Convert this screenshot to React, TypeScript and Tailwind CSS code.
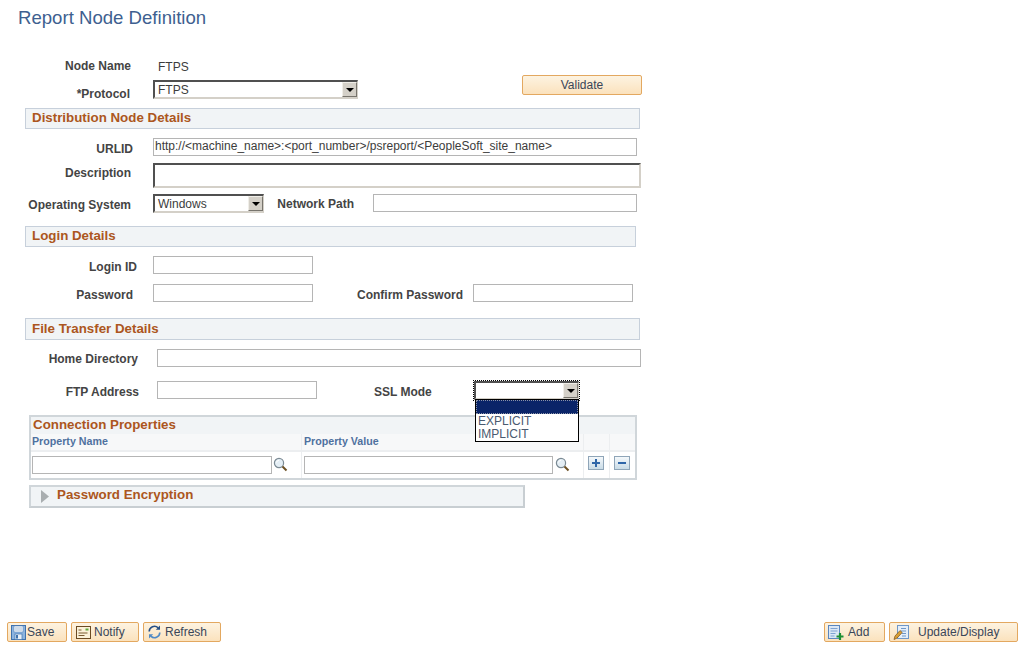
import React from "react";

const Label = ({ w, children, cls = "" }: { w: string; children: React.ReactNode; cls?: string }) => (
  <span className={`shrink-0 whitespace-nowrap text-right text-[12px] leading-[14px] font-bold text-[#444444] ${w} ${cls}`}>{children}</span>
);

const Input = ({ w, h = "h-[18px]", ml = "", value = "" }: { w: string; h?: string; ml?: string; value?: string }) => (
  <div className={`box-border shrink-0 overflow-hidden whitespace-nowrap border border-[#b5b5b5] bg-white pl-[1px] text-[12px] leading-[15px] text-[#3c3c3c] ${w} ${h} ${ml}`}>{value}</div>
);

const Arrow = () => (
  <div className="box-border flex h-[15px] w-[15px] shrink-0 items-center justify-center border border-t-[#f0eee8] border-l-[#f0eee8] border-r-[#77746d] border-b-[#77746d] bg-[#d4d0c8]">
    <svg width="8" height="4" viewBox="0 0 8 4"><path d="M0 0h8L4 4z" fill="#000" /></svg>
  </div>
);

const Select = ({ w, ml = "", value }: { w: string; ml?: string; value: string }) => (
  <div className={`box-border flex h-[19px] shrink-0 items-center justify-between border-2 border-r border-t-[#505050] border-l-[#505050] border-r-[#d4d0c8] border-b-[#d4d0c8] bg-white pl-[3px] text-[12px] text-[#3c3c3c] ${w} ${ml}`}>
    <span className="leading-[14px]">{value}</span>
    <Arrow />
  </div>
);

const Section = ({ w, h, mt, children, cls = "-mt-[2px]" }: { w: string; h: string; mt: string; children: React.ReactNode; cls?: string }) => (
  <div className={`ml-[25px] box-border flex items-center border border-[#c7d0db] bg-[#f1f4f6] pl-[6px] text-[13.33px] font-bold text-[#ac5620] ${w} ${h} ${mt}`}>
    <span className={cls}>{children}</span>
  </div>
);

const Magnifier = () => (
  <svg width="15" height="15" viewBox="0 0 15 15" className="shrink-0">
    <circle cx="6" cy="6" r="4.600" fill="#e4eef5" stroke="#7b8a94" strokeWidth="1.200" />
    <path d="M3.500 5.500a2.600 2.600 0 0 1 2.400-2.200" stroke="#fff" fill="none" />
    <path d="M9.500 9.500l4 4" stroke="#6b4f22" strokeWidth="2" />
  </svg>
);

const PageButton = ({ w, icon, label, cls = "" }: { w: string; icon?: React.ReactNode; label: string; cls?: string }) => (
  <div className={`box-border flex h-[20px] shrink-0 items-center rounded-[2px] border border-[#e3a860] bg-gradient-to-b from-[#fdf3e1] to-[#fbe2bd] text-[12px] text-[#3a4658] ${w} ${cls}`}>
    {icon}
    <span className="leading-[14px]">{label}</span>
  </div>
);

const SaveIcon = () => (
  <svg width="15" height="15" viewBox="0 0 15 15" className="ml-[3px] mr-[1px] shrink-0">
    <rect x="0.500" y="0.500" width="14" height="14" fill="#8db4df" stroke="#3f72ad" />
    <rect x="3" y="1" width="9" height="6" fill="#fff" stroke="#5a86b8" strokeWidth="0.600" />
    <path d="M4 3h7M4 5h7" stroke="#9cb8d6" />
    <rect x="4" y="9" width="7" height="5.500" fill="#e8f0f8" stroke="#3f72ad" strokeWidth="0.700" />
    <rect x="5" y="10" width="2" height="3.500" fill="#3f72ad" />
  </svg>
);

const NotifyIcon = () => (
  <svg width="15" height="13" viewBox="0 0 15 13" className="ml-[4px] mr-[3px] shrink-0">
    <rect x="0.500" y="0.500" width="14" height="12" fill="#fbf1d8" stroke="#6b4a22" />
    <path d="M2.500 4h3M2.500 7h9M2.500 9.500h6" stroke="#7a5a30" />
    <rect x="9.500" y="2.500" width="3" height="2" fill="#5fa83c" />
  </svg>
);

const RefreshIcon = () => (
  <svg width="13" height="14" viewBox="0 0 13 14" className="ml-[4px] mr-[4px] shrink-0" fill="none">
    <path d="M1.200 6.500a5.200 5.200 0 0 1 8.900-3.600" stroke="#264f85" strokeWidth="1.600" />
    <path d="M7.800 4.800h4.200V0.600z" fill="#264f85" />
    <path d="M11.800 7.500a5.200 5.200 0 0 1-8.900 3.600" stroke="#4f8ac6" strokeWidth="1.600" />
    <path d="M5.200 9.200H1v4.200z" fill="#4f8ac6" />
  </svg>
);

const AddIcon = () => (
  <svg width="16" height="15" viewBox="0 0 16 15" className="ml-[3px] mr-[4px] shrink-0">
    <rect x="0.500" y="0.500" width="11" height="13" fill="#dbe7f5" stroke="#5a86c0" />
    <path d="M2.500 3.500h7M2.500 6h7M2.500 8.500h5M2.500 11h4" stroke="#7ea3d2" />
    <path d="M12 8v7M8.500 11.500h7" stroke="#1e8f34" strokeWidth="2.200" />
  </svg>
);

const UpdateIcon = () => (
  <svg width="16" height="15" viewBox="0 0 16 15" className="ml-[3px] mr-[9px] shrink-0">
    <rect x="4.500" y="0.500" width="11" height="13" fill="#e4eef9" stroke="#6f97c8" />
    <path d="M8 3.500h5M8 6h5M9 8.500h4M9 11h4" stroke="#6f97c8" />
    <path d="M1 14.500l1-3.500 5-5.500 2.200 2-5 5.500z" fill="#d9a035" stroke="#7a4f18" strokeWidth="0.700" />
  </svg>
);

const PlusMinus = ({ kind }: { kind: "plus" | "minus" }) => (
  <div className="box-border flex h-[14px] w-[16px] items-center justify-center border border-[#8fa5b8] bg-gradient-to-b from-[#f4f8fb] to-[#c9dbe6]">
    <svg width="10" height="10" viewBox="0 0 10 10">
      {kind === "plus" ? <path d="M5 1v8M1 5h8" stroke="#2f66a8" strokeWidth="2" /> : <path d="M1 5h8" stroke="#2f66a8" strokeWidth="2" />}
    </svg>
  </div>
);

export default function App() {
  return (
    <div className="relative flex h-[651px] w-[1023px] flex-col overflow-hidden bg-white font-['Liberation_Sans',Arial,sans-serif]">
      <div className="ml-[18px] mt-[7px] h-[21px] whitespace-nowrap text-[18.6px] leading-[21px] text-[#3e5f90]">Report Node Definition</div>

      <div className="mt-[30px] flex h-[41px] items-start">
        <div className="flex flex-col">
          <div className="flex h-[17px] items-center">
            <Label w="w-[131px]" cls="-mt-[2px]">Node Name</Label>
            <span className="ml-[27px] text-[12px] leading-[14px] text-[#3c3c3c]">FTPS</span>
          </div>
          <div className="mt-[5px] flex h-[19px] items-start">
            <Label w="w-[130px]" cls="mt-[7px]">*Protocol</Label>
            <Select w="w-[205px]" ml="ml-[23px]" value="FTPS" />
          </div>
        </div>
        <PageButton w="w-[120px]" label="Validate" cls="ml-[164px] mt-[17px] justify-center" />
      </div>

      <Section w="w-[615px]" h="h-[21px]" mt="mt-[9px]">Distribution Node Details</Section>

      <div className="mt-[9px] flex h-[18px] items-center">
        <Label w="w-[133px]" cls="mt-[3px]">URLID</Label>
        <Input w="w-[484px]" ml="ml-[20px]" value="http://<machine_name>:<port_number>/psreport/<PeopleSoft_site_name>" />
      </div>
      <div className="mt-[7px] flex h-[25px] items-start">
        <Label w="w-[131px]" cls="mt-[3px]">Description</Label>
        <div className="ml-[22px] box-border h-[25px] w-[488px] border-2 border-t-[#505050] border-l-[#505050] border-r-[#d4d0c8] border-b-[#d4d0c8] bg-white" />
      </div>
      <div className="mt-[6px] flex h-[19px] items-start">
        <Label w="w-[131px]" cls="mt-[4px]">Operating System</Label>
        <Select w="w-[111px]" ml="ml-[22px]" value="Windows" />
        <Label w="w-[77px]" cls="ml-[13px] mt-[3px]">Network Path</Label>
        <Input w="w-[264px]" ml="ml-[19px]" />
      </div>

      <Section w="w-[611px]" h="h-[21px]" mt="mt-[13px]">Login Details</Section>

      <div className="mt-[9px] flex h-[18px] items-center">
        <Label w="w-[137px]" cls="mt-[3px]">Login ID</Label>
        <Input w="w-[160px]" ml="ml-[16px]" />
      </div>
      <div className="mt-[10px] flex h-[18px] items-center">
        <Label w="w-[133px]" cls="mt-[4px]">Password</Label>
        <Input w="w-[160px]" ml="ml-[20px]" />
        <Label w="w-[106px]" cls="ml-[44px] mt-[4px]">Confirm Password</Label>
        <Input w="w-[160px]" ml="ml-[10px]" />
      </div>

      <Section w="w-[615px]" h="h-[22px]" mt="mt-[16px]" cls="-mt-[1px]">File Transfer Details</Section>

      <div className="mt-[9px] flex h-[18px] items-center">
        <Label w="w-[138px]" cls="mt-[2px]">Home Directory</Label>
        <Input w="w-[484px]" ml="ml-[19px]" />
      </div>
      <div className="mt-[14px] flex h-[19px] items-start">
        <Label w="w-[139px]" cls="mt-[4px]">FTP Address</Label>
        <Input w="w-[160px]" ml="ml-[18px]" />
        <Label w="w-[57px]" cls="ml-[57px] mt-[4px]">SSL Mode</Label>
        <div className="relative ml-[43px] w-[105px]">
          <div className="absolute -inset-[1px] h-[21px] border border-dotted border-black" />
          <Select w="w-[105px]" value="" />
          <div className="absolute left-[1px] top-[18px] z-10 box-border h-[43px] w-[104px] border border-black bg-white text-[12px] leading-[13px] text-[#4a5a70]">
            <div className="h-[14px] border border-dotted border-[#8b93a8] bg-[#0a2468]" />
            <div className="mt-[1px] pl-[2px]">EXPLICIT</div>
            <div className="pl-[2px]">IMPLICIT</div>
          </div>
        </div>
      </div>

      <div className="ml-[29px] mt-[15px] box-border w-[608px] border-2 border-[#d0d6da]">
        <div className="h-[17px] bg-[#f1f4f6] pl-[2px] text-[13.33px] leading-[15px] font-bold text-[#ac5620]">Connection Properties</div>
        <div className="grid grid-cols-[270px_281px_25px_25px] gap-x-[1px] bg-[#eceef0] pb-[2px] text-[10.67px] leading-[15px] font-bold text-[#4f719f]">
          <div className="h-[16px] bg-[#f7f8f9] pl-[1px]">Property Name</div>
          <div className="h-[16px] bg-[#f7f8f9] pl-[2px]">Property Value</div>
          <div className="h-[16px] bg-[#f7f8f9]" />
          <div className="h-[16px] bg-[#f7f8f9]" />
        </div>
        <div className="grid h-[26px] grid-cols-[270px_281px_25px_25px] gap-x-[1px] bg-[#eceef0]">
          <div className="flex items-start bg-white pl-[1px] pt-[4px]">
            <Input w="w-[240px]" />
            <div className="ml-[1px] mt-[1px]"><Magnifier /></div>
          </div>
          <div className="flex items-start bg-white pl-[2px] pt-[4px]">
            <Input w="w-[249px]" />
            <div className="ml-[2px] mt-[1px]"><Magnifier /></div>
          </div>
          <div className="flex items-start justify-center bg-white pr-[2px] pt-[4px]"><PlusMinus kind="plus" /></div>
          <div className="flex items-start justify-center bg-white pr-[2px] pt-[4px]"><PlusMinus kind="minus" /></div>
        </div>
      </div>

      <div className="ml-[29px] mt-[5px] box-border flex h-[23px] w-[496px] items-center border-2 border-t-[#d0d6da] border-l-[#d0d6da] border-r-[#c8ced2] border-b-[#c8ced2] bg-[#f1f4f6] text-[13.33px] font-bold text-[#ac5620]">
        <svg width="8" height="13" viewBox="0 0 8 13" className="ml-[10px] shrink-0"><path d="M0 0l8 6.500-8 6.500z" fill="#a9aeb0" /></svg>
        <span className="-mt-[4px] ml-[8px]">Password Encryption</span>
      </div>

      <div className="mb-[9px] ml-[7px] mr-[5px] mt-auto flex items-center">
        <PageButton w="w-[60px]" icon={<SaveIcon />} label="Save" />
        <PageButton w="w-[68px]" icon={<NotifyIcon />} label="Notify" cls="ml-[4px]" />
        <PageButton w="w-[78px]" icon={<RefreshIcon />} label="Refresh" cls="ml-[4px]" />
        <PageButton w="w-[61px]" icon={<AddIcon />} label="Add" cls="ml-auto" />
        <PageButton w="w-[129px]" icon={<UpdateIcon />} label="Update/Display" cls="ml-[4px]" />
      </div>
    </div>
  );
}
